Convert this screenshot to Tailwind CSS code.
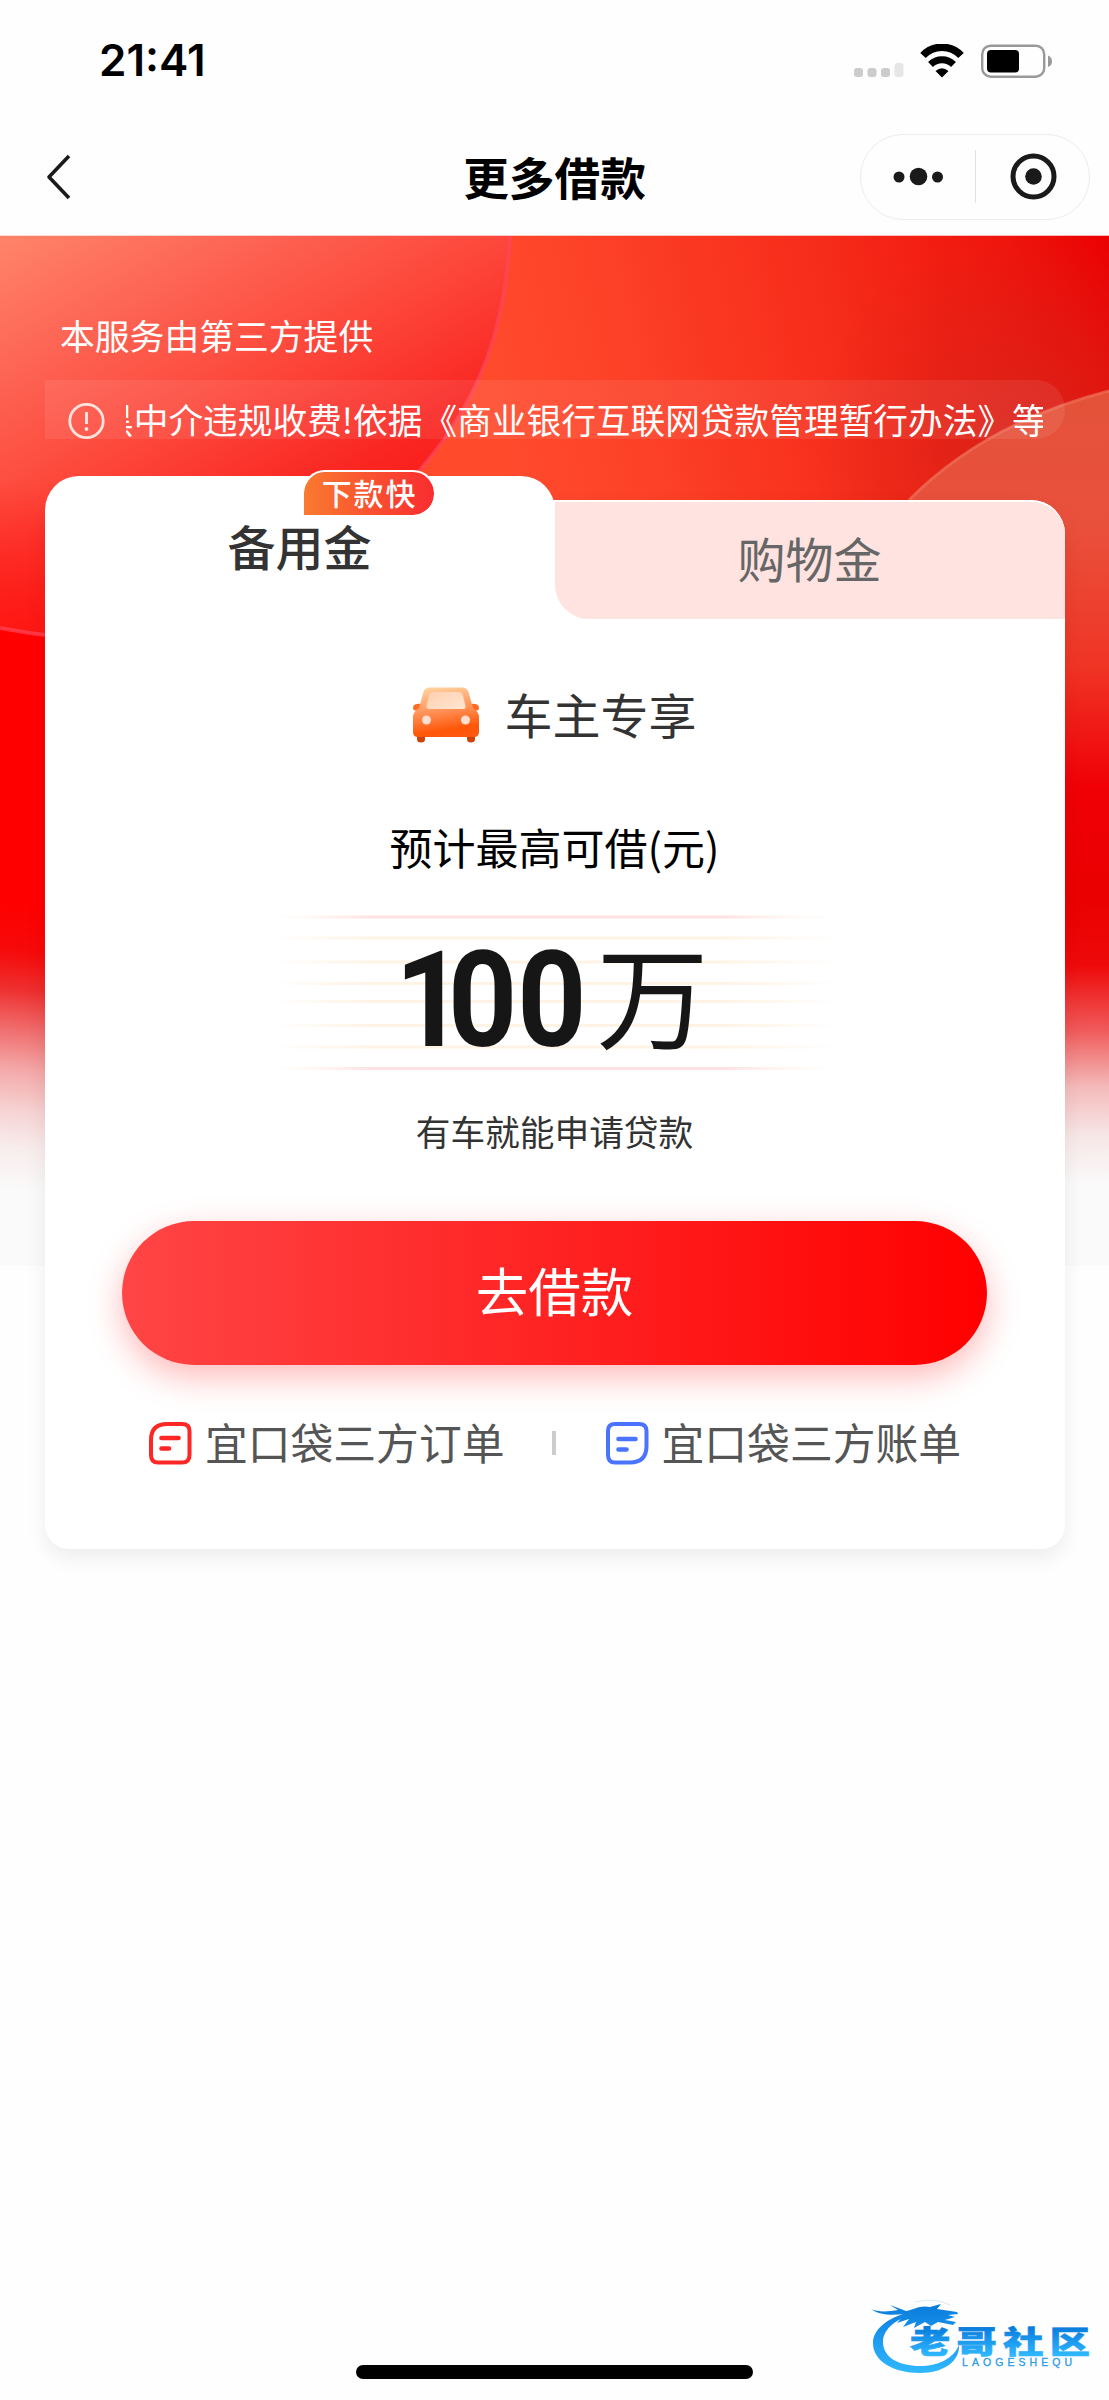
<!DOCTYPE html>
<html lang="zh-CN">
<head>
<meta charset="utf-8">
<title>更多借款</title>
<script src="https://cdn.jsdelivr.net/npm/@tailwindcss/browser@4"></script>
</head>
<body class="bg-white">
<div class="relative w-[1109px] h-[2400px] overflow-hidden bg-[#fefefe] font-['Noto_Sans_CJK_SC',sans-serif] text-[#333] whitespace-nowrap">

  <!-- status bar -->
  <div class="h-[120px] flex items-center justify-between pl-[99px] pr-[57px]">
    <span class="font-['Inter',sans-serif] font-semibold text-[44px] leading-none text-black">21:41</span>
    <svg class="block mt-[1px]" width="199" height="34" viewBox="0 0 199 34">
      <g fill="#ccc"><rect x="1" y="24" width="9" height="9" rx="3"/><rect x="14.500" y="24" width="9" height="9" rx="3"/><rect x="28" y="24" width="9" height="9" rx="3"/></g>
      <rect x="41.500" y="19" width="9" height="14" rx="3" fill="#e6e6e6"/>
      <g fill="none" stroke="#000"><path d="M70 11.500A26 26 0 0 1 108 11.500" stroke-width="7.500"/><path d="M77.500 20.500A16.500 16.500 0 0 1 100.500 20.500" stroke-width="7"/></g>
      <path d="M82.500 27Q89 21.500 95.500 27L89 33.500Z" fill="#000"/>
      <rect x="129.200" y="1.700" width="62" height="31" rx="8.500" fill="none" stroke="#999" stroke-width="2.400"/>
      <rect x="134" y="6" width="32" height="22.500" rx="4" fill="#000"/>
      <path d="M195 11.500Q199 13 199 17.500Q199 21.500 195 23Z" fill="#999"/>
    </svg>
  </div>

  <!-- navigation bar -->
  <div class="relative h-[115px] flex items-center justify-center">
    <svg class="absolute left-[44px] top-[32px]" width="30" height="50" viewBox="0 0 30 50"><path d="M25 4L5 25L25 46" fill="none" stroke="#1a1a1a" stroke-width="3.600" stroke-linejoin="round"/></svg>
    <h1 class="text-[45.700px] leading-[60px] font-bold text-black -mt-[3px]">更多借款</h1>
    <div class="absolute left-[860px] top-[14px] w-[230px] h-[86px] rounded-full border border-[#ededed]">
      <svg width="228" height="84" viewBox="0 0 228 84"><g fill="#1a1a1a"><circle cx="38" cy="42" r="5.500"/><circle cx="57.500" cy="41.500" r="8.800"/><circle cx="76.500" cy="42" r="5.500"/><circle cx="172.500" cy="41.500" r="8.300"/></g><circle cx="172.500" cy="41.500" r="20.500" fill="none" stroke="#1a1a1a" stroke-width="5"/><path d="M114.500 15V68" stroke="#e2e2e2"/></svg>
    </div>
  </div>

  <!-- hero background -->
  <svg class="absolute left-0 top-[235px]" width="1109" height="1031" viewBox="0 235 1109 1031">
    <defs>
      <linearGradient id="base" gradientUnits="userSpaceOnUse" x1="500" y1="400" x2="1109" y2="260"><stop offset="0" stop-color="#ff4a2c"/><stop offset=".2" stop-color="#fd4128"/><stop offset=".55" stop-color="#f62c1a"/><stop offset=".85" stop-color="#f0140c"/><stop offset="1" stop-color="#ec0000"/></linearGradient>
      <radialGradient id="dark" gradientUnits="userSpaceOnUse" cx="1040" cy="450" r="230"><stop offset="0" stop-color="#d4241a" stop-opacity=".85"/><stop offset="1" stop-color="#d4241a" stop-opacity="0"/></radialGradient>
      <linearGradient id="disc" gradientUnits="userSpaceOnUse" x1="0" y1="235" x2="210" y2="615"><stop offset="0" stop-color="#ff846a"/><stop offset=".33" stop-color="#fd6050"/><stop offset=".58" stop-color="#fd463a"/><stop offset=".86" stop-color="#f92622"/><stop offset="1" stop-color="#fb1c18"/></linearGradient>
      <linearGradient id="discFade" gradientUnits="userSpaceOnUse" x1="0" y1="480" x2="0" y2="640"><stop offset="0" stop-color="#ff1410" stop-opacity="0"/><stop offset="1" stop-color="#ff1410" stop-opacity=".9"/></linearGradient>
      <linearGradient id="right" gradientUnits="userSpaceOnUse" x1="0" y1="392" x2="0" y2="1200"><stop offset="0" stop-color="#e4523a"/><stop offset=".17" stop-color="#e9503c"/><stop offset=".34" stop-color="#f03424"/><stop offset=".49" stop-color="#f00006"/><stop offset=".63" stop-color="#ea0000"/><stop offset=".71" stop-color="#ee0a0a"/><stop offset=".79" stop-color="#f05a5a"/><stop offset=".86" stop-color="#f4baba"/><stop offset=".92" stop-color="#f7e6e6"/><stop offset=".98" stop-color="#fafafa"/></linearGradient>
      <linearGradient id="left" gradientUnits="userSpaceOnUse" x1="0" y1="900" x2="-33" y2="1185"><stop offset="0" stop-color="#f00"/><stop offset=".17" stop-color="#f60a0a"/><stop offset=".3" stop-color="#ee2e2e"/><stop offset=".44" stop-color="#f06c6c"/><stop offset=".58" stop-color="#f4a8a8"/><stop offset=".72" stop-color="#f6d2d2"/><stop offset=".85" stop-color="#f8ecec"/><stop offset="1" stop-color="#fafafa"/></linearGradient>
    </defs>
    <path d="M0 235H1109V1266H0Z" fill="#fafafa"/>
    <path d="M0 235H1109V760H0Z" fill="url(#base)"/>
    <path d="M500 235H1109V760H500Z" fill="url(#dark)"/>
    <path d="M0 600H500V1266H0Z" fill="url(#left)"/>
    <path d="M0 235H510C505 330 480 400 420 470C330 600 190 665 0 628Z" fill="url(#disc)"/>
    <path d="M0 480H413C330 600 190 665 0 628Z" fill="url(#discFade)"/>
    <path d="M510 235C505 330 480 400 420 470C330 600 190 665 0 628" fill="none" stroke="#ff4658" stroke-width="4" opacity=".7"/>
    <path d="M909 500Q985 423 1109 391V1266H909Z" fill="url(#right)"/>
    <path d="M909 500Q985 423 1109 391" fill="none" stroke="#f0705a" stroke-width="3" opacity=".7"/>
    <path d="M0 235.500H1109" stroke="#fff" opacity=".7"/>
  </svg>

  <main class="relative px-[44.500px]">
    <p class="pt-[74px] pl-[15.500px] text-[34.800px] leading-[52px] text-white">本服务由第三方提供</p>

    <div class="mt-[19px] h-[59px] rounded-r-[29px] bg-white/8 flex items-start pl-[23px] pr-[22px]">
      <svg class="shrink-0 mt-[22px]" width="37" height="38" viewBox="0 0 37 38"><circle cx="18.500" cy="19" r="16.700" fill="none" stroke="#ffe3dc" stroke-width="2.800"/><path d="M18.500 10V22" stroke="#ffe3dc" stroke-width="3"/><circle cx="18.500" cy="27" r="1.900" fill="#ffe3dc"/></svg>
      <div class="ml-[21px] mt-[13px] h-[52px] flex-1 overflow-hidden">
        <p class="-ml-[26.500px] text-[34.700px] leading-[52px] text-white">黑中介违规收费!依据《商业银行互联网贷款管理暂行办法》等</p>
      </div>
    </div>

    <section class="mt-[37px] h-[1073px] relative">
      <div class="absolute inset-x-0 top-[24px] bottom-0 bg-white rounded-[24px] rounded-tr-[34px] shadow-[0_9px_20px_rgba(0,0,0,0.07)]"></div>
      <div class="relative flex">
        <div class="relative w-[510px] h-[143px] rounded-t-[34px] bg-white flex justify-center pt-[33px]">
          <span class="text-[48px] leading-[72px] font-medium">备用金</span>
          <span class="absolute left-[257px] -top-[6px] w-[134px] h-[47px] rounded-[23px] rounded-bl-[2px] border-2 border-white bg-linear-to-r/srgb from-[#fa7a30] to-[#f92c30] bg-clip-padding text-white text-[30px] leading-[41px] tracking-[1.800px] text-center pl-[2px] font-medium">下款快</span>
        </div>
        <div class="mt-[24px] h-[119px] w-[510px] border-t-2 border-white rounded-tr-[34px] rounded-bl-[34px] bg-[#fee3e0] flex justify-center pt-[19px]">
          <span class="text-[48px] leading-[72px] text-[#666]">购物金</span>
        </div>
      </div>

      <div class="relative flex flex-col items-center">
        <div class="mt-[60px] flex items-center h-[72px]">
          <svg width="68" height="56" viewBox="0 0 68 56">
            <defs><linearGradient id="car" x1=".4" y1="0" x2=".6" y2="1"><stop offset="0" stop-color="#ffcf9c"/><stop offset=".45" stop-color="#ff9258"/><stop offset=".85" stop-color="#ff5608"/><stop offset="1" stop-color="#ff5a10"/></linearGradient><linearGradient id="glass" x1="0" y1="0" x2="1" y2="1"><stop offset="0" stop-color="#ffcfb0"/><stop offset="1" stop-color="#ffe6d2"/></linearGradient></defs>
            <path d="M5 46H13V52Q13 55.500 9 55.500Q5 55.500 5 52ZM55 46H63V52Q63 55.500 59 55.500Q55 55.500 55 52Z" fill="#cf4205"/>
            <path d="M10 17Q1 16 1 21Q1 24 4 23.500H8ZM58 17Q67 16 67 21Q67 24 64 23.500H60Z" fill="#ff6a24"/>
            <path d="M18 0.500H50Q55 0.500 56.500 5L61 21Q67 25 67 30V45Q67 50 62 50H6Q1 50 1 45V30Q1 25 7 21L11.500 5Q13 0.500 18 0.500Z" fill="url(#car)"/>
            <path d="M22 5H46Q50 5 51 9L53.500 19Q54 22 51 22H17Q14 22 14.500 19L17 9Q18 5 22 5Z" fill="url(#glass)"/>
            <circle cx="14.500" cy="33" r="4.500" fill="#ffe0d0"/><circle cx="53.500" cy="33" r="4.500" fill="#ffe0d0"/>
          </svg>
          <span class="ml-[24px] text-[48px] leading-[68px] pb-[4px]">车主专享</span>
        </div>
        <p class="mt-[62px] text-[43px] leading-[66px] text-black">预计最高可借(元)</p>

        <div class="relative mt-[28px] w-[560px] h-[170px]">
          <svg class="absolute left-0 top-[7px]" width="560" height="160" viewBox="0 0 560 160">
            <defs>
              <linearGradient id="pink"><stop offset="0" stop-color="#fff3e4" stop-opacity="0"/><stop offset=".17" stop-color="#fee2e2"/><stop offset=".8" stop-color="#fee2e2"/><stop offset="1" stop-color="#fff3e4" stop-opacity="0"/></linearGradient>
              <linearGradient id="cream"><stop offset="0" stop-color="#fff1e0" stop-opacity="0"/><stop offset=".17" stop-color="#fff3e6"/><stop offset=".8" stop-color="#fff3e6"/><stop offset="1" stop-color="#fff1e0" stop-opacity="0"/></linearGradient>
            </defs>
            <g fill="url(#pink)"><rect y="1.500" width="560" height="3"/><rect y="153" width="560" height="3"/></g>
            <g fill="url(#cream)"><rect y="22.500" width="560" height="3"/><rect y="46.500" width="560" height="3"/><rect y="68" width="560" height="3"/><rect y="86" width="560" height="3"/><rect y="110" width="560" height="3"/><rect y="131.500" width="560" height="3"/></g>
          </svg>
          <div class="relative flex h-full items-center pl-[120px] text-[#161616]">
            <span class="w-[205px] mt-[17px] font-['Roboto',sans-serif] font-bold text-[134px] leading-[170px] origin-left scale-x-[.9]"><span class="tracking-[-18px]">1</span>00</span>
            <span class="text-[112px] leading-[170px] -ml-[3px]">万</span>
          </div>
        </div>

        <p class="mt-[28px] text-[34.700px] leading-[52px]">有车就能申请贷款</p>
        <button class="mt-[64px] w-[865px] h-[144px] rounded-full bg-linear-to-r/srgb from-[#ff4545] to-[#ff0000] text-white text-[52.500px] leading-[78px] pb-[9px] shadow-[0_12px_34px_rgba(255,0,0,0.28)]">去借款</button>

        <div class="mt-[43px] flex items-center h-[66px] text-[42.800px] leading-[66px] text-[#555]">
          <svg class="mt-[3px]" width="44" height="44" viewBox="0 0 44 44"><path d="M19 3H34Q41.500 3 41.500 10V34Q41.500 41.500 34 41.500H10Q3 41.500 3 34V19Q3 3 19 3Z" fill="none" stroke="#ff2626" stroke-width="4"/><path d="M13.500 17H30.500M13.500 27.500H21" stroke="#ff2626" stroke-width="4.600" stroke-linecap="round"/></svg>
          <span class="ml-[13px]">宜口袋三方订单</span>
          <i class="ml-[47px] mt-[3px] w-[4px] h-[24px] bg-[#ccc]"></i>
          <svg class="ml-[49px] mt-[3px]" width="44" height="44" viewBox="0 0 44 44"><path d="M10 3H34Q41.500 3 41.500 10V25Q41.500 41.500 25 41.500H10Q3 41.500 3 34V10Q3 3 10 3Z" fill="none" stroke="#4a74ff" stroke-width="4"/><path d="M13.500 18H30.500M13.500 28.500H21.500" stroke="#4a74ff" stroke-width="4.600" stroke-linecap="round"/></svg>
          <span class="ml-[13px]">宜口袋三方账单</span>
        </div>
      </div>
    </section>
  </main>

  <div class="absolute left-[356px] top-[2365px] w-[397px] h-[14px] rounded-full bg-black"></div>

  <!-- community watermark -->
  <svg class="absolute left-[865px] top-[2295px]" width="244" height="90" viewBox="865 2295 244 90">
    <defs>
      <linearGradient id="ring" gradientUnits="userSpaceOnUse" x1="0" y1="2305" x2="0" y2="2373"><stop offset="0" stop-color="#0a7cdc"/><stop offset="1" stop-color="#2fb8ff"/></linearGradient>
      <linearGradient id="word" gradientUnits="userSpaceOnUse" x1="0" y1="-27" x2="0" y2="3"><stop offset="0" stop-color="#0678da"/><stop offset="1" stop-color="#30b8ff"/></linearGradient>
    </defs>
    <g fill="url(#ring)">
      <path d="M910 2312C886 2318 873 2330 873 2343C873 2361 893 2373 920 2373C944 2373 960 2361 959 2345C953 2359 938 2366 920 2366C898 2366 883 2357 883 2342C883 2331 893 2320 912 2315Z"/>
      <path d="M871 2309C880 2313 890 2311 898 2310L890 2305L906 2311C915 2309 920 2305 930 2307L941 2304L937 2309L957 2312L958 2314L948 2315L955 2317L945 2320L956 2322L953 2325L938 2322L931 2326L925 2322L914 2328L916 2322L903 2327L909 2319L897 2323L905 2314C893 2315 880 2316 871 2309Z"/>
    </g>
    <path d="M915 2302Q935 2297 950 2305" fill="none" stroke="#d6ebfb" stroke-width="1"/>
    <g transform="translate(910 2352.500) scale(1.320 1)"><text x="0" y="0" font-family="'Noto Sans CJK SC', sans-serif" font-weight="900" font-size="30.500" letter-spacing="4.800" fill="url(#word)" stroke="url(#word)" stroke-width=".7">老哥社区</text></g>
    <text x="962" y="2366" font-family="'Liberation Sans', sans-serif" font-size="10.500" textLength="110" lengthAdjust="spacing" fill="#2a9bea" stroke="#2a9bea" stroke-width=".3">LAOGESHEQU</text>
  </svg>
</div>
</body>
</html>
